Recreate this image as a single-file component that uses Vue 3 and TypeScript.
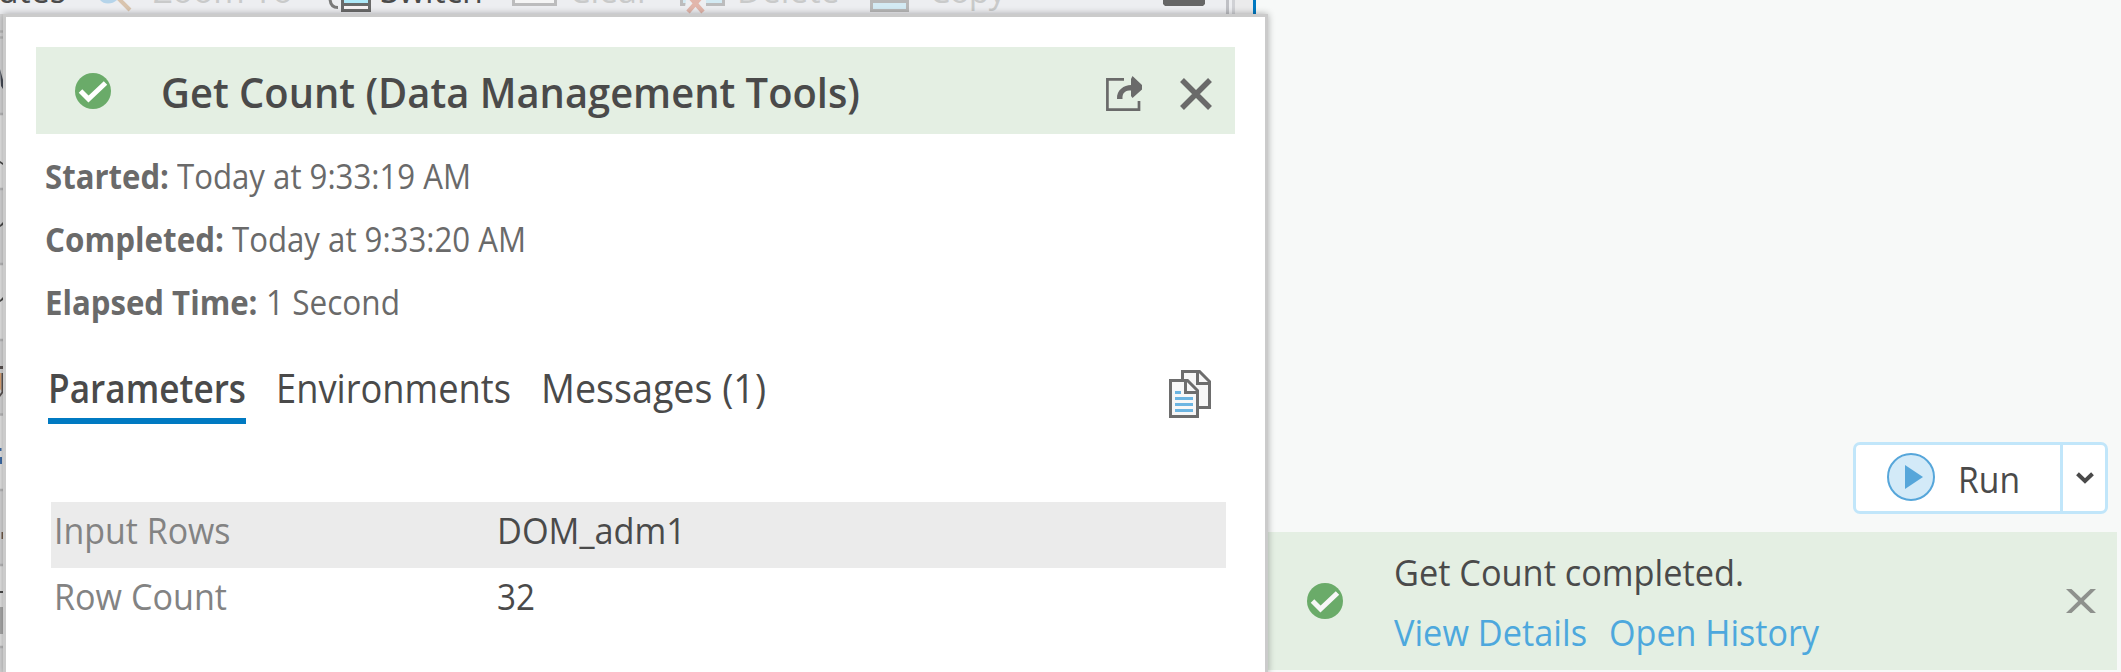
<script setup lang="ts">
import type { Directive } from 'vue'

interface Line { label: string; labelWidth: number; value: string; valueWidth: number }
interface Tab { name: string; width: number; active?: boolean }
interface Row { name: string; nameWidth: number; value: string; valueWidth: number }

// Condenses a single line of text horizontally so that it advances by the given width.
const vFit: Directive<HTMLElement, number> = {
  mounted(el, { value }) {
    const natural = el.getBoundingClientRect().width
    el.style.transform = `scaleX(${value / natural})`
    el.style.marginRight = `${value - natural}px`
  },
}

const lines: Line[] = [
  { label: 'Started:', labelWidth: 124, value: 'Today at 9:33:19 AM', valueWidth: 294 },
  { label: 'Completed:', labelWidth: 179, value: 'Today at 9:33:20 AM', valueWidth: 294 },
  { label: 'Elapsed Time:', labelWidth: 212.5, value: '1 Second', valueWidth: 134 },
]
const tabs: Tab[] = [
  { name: 'Parameters', width: 198, active: true },
  { name: 'Environments', width: 235 },
  { name: 'Messages (1)', width: 225 },
]
const rows: Row[] = [
  { name: 'Input Rows', nameWidth: 176.5, value: 'DOM_adm1', valueWidth: 189 },
  { name: 'Row Count', nameWidth: 173, value: '32', valueWidth: 38 },
]
</script>

<template>
  <div class="screen">
    <div class="toolbar">
      <svg class="toolbar-icons" width="1265" height="14" viewBox="0 0 1265 14">
        <path d="M100 0H117Q113 3.5 108 3.5Q103 3.5 100 0Z" fill="#b5d4ea" />
        <path d="M118 -2L130 10" stroke="#d9c4ae" stroke-width="4" />
        <path d="M330 -2Q330 7.5 338 7.5" fill="none" stroke="#7a7a7a" stroke-width="3" />
        <path d="M341 0H371V12H341Z" fill="#6a6a6a" />
        <path d="M344 0H368V3H344Z" fill="#aee8f7" />
        <path d="M344 6H368V9H344Z" fill="#f8f2f3" />
        <path d="M512 0H557V6H512Z" fill="#bcbcbd" />
        <path d="M515 0H554V3H515Z" fill="#f5f5f5" />
        <path d="M680 0H725V6H680Z" fill="#bcbcbd" />
        <path d="M683 0H722V3H683Z" fill="#d3eaf3" />
        <path d="M686 0H706V6L708 14H684Z" fill="#edeef1" />
        <path d="M688 12L702 -4M703 12L689 -4" stroke="#e2b6ab" stroke-width="4.5" />
        <path d="M870 0H909V12H870Z" fill="#b8b8b8" />
        <path d="M873 3H906V9H873Z" fill="#d3eaf3" />
        <path d="M1163 0H1205V4L1203 6H1165L1163 4Z" fill="#666" />
        <path d="M1227.5 0V14" stroke="#bfc0c5" stroke-width="3" />
        <path d="M1233.5 0V14" stroke="#d0d1d5" stroke-width="3" />
        <path d="M1235 0H1253V14H1235Z" fill="#ebebec" />
        <path d="M1253 0H1256V14H1253Z" fill="#0079c1" />
        <path d="M1256 0H1265V14H1256Z" fill="#f7f9f8" />
      </svg>
      <span class="command attributes">Attributes</span>
      <span class="command zoom off">Zoom To</span>
      <span class="command switch">Switch</span>
      <span class="command clear off">Clear</span>
      <span class="command delete off">Delete</span>
      <span class="command copy off">Copy</span>
    </div>

    <svg class="grid-edge" width="3" height="658" viewBox="0 14 3 658">
      <path d="M0 14H3V672H0Z" fill="#d5d5d6" />
      <path d="M0 115H3V188H0ZM0 265H3V339H0ZM0 415H3V489H0ZM0 566H3V646H0Z" fill="#e5e5e5" />
      <path d="M0 31.5H3M0 37.5H3M0 114H3M0 189H3M0 264H3M0 340H3M0 414.500H3M0 490H3M0 565H3M0 647H3" stroke="#b9b9ba" stroke-width="2.500" />
      <path d="M0 69L3 80V89L1 86Z" fill="#454a55" />
      <path d="M0 161L3 163V165L0 163ZM0 225L3 222V225L0 227ZM0 300L3 297V300L0 302Z" fill="#4a4a4a" />
      <path d="M0 373H1.500V391L0 389Z" fill="#dda373" />
      <path d="M0 366H3V369H0ZM1.500 373H3V393L0 397V394L1.500 392Z" fill="#5a5352" />
      <path d="M0 448H1.500V451H0ZM0 457H2V464H0Z" fill="#3d6ca8" />
      <path d="M1.500 532H3V539H1.500Z" fill="#735b49" />
      <path d="M0 591H3V593H0Z" fill="#4a4a4a" />
      <path d="M0 607H3V634H0Z" fill="#a9a9a9" />
    </svg>

    <section class="details">
      <header class="title-bar">
        <svg class="title-check" width="36" height="36" viewBox="0 0 36 36">
          <circle cx="18" cy="18" r="18" fill="#6aab69" />
          <path d="M5.500 18L13.500 26L30.500 10" fill="none" stroke="#fff" stroke-width="5" />
        </svg>
        <h1><span v-fit="699" class="fit">Get Count (Data Management Tools)</span></h1>
        <svg class="share" width="37" height="37" viewBox="0 0 37 37">
          <path d="M18 3.300H1.400V33.700H33V25" fill="none" stroke="#6a6a6a" stroke-width="2.700" />
          <path d="M11 23C10.500 14 18 9 25 9V3L26.500 0L36 9V13.500L26.500 22L25 20V14.500C20 14.500 16 16 16.500 23Z" fill="#6a6a6a" />
        </svg>
        <svg class="dismiss" width="32" height="32" viewBox="0 0 32 32">
          <path d="M2 2L30 30M30 2L2 30" stroke="#6a6a6a" stroke-width="5.500" />
        </svg>
      </header>

      <div class="times">
        <p v-for="line in lines" :key="line.label">
          <b v-fit="line.labelWidth" class="fit">{{ line.label }}</b>
          <span v-fit="line.valueWidth" class="fit">{{ line.value }}</span>
        </p>
      </div>

      <nav class="tabs">
        <a v-for="tab in tabs" :key="tab.name" :class="{ active: tab.active }">
          <span v-fit="tab.width" class="fit">{{ tab.name }}</span>
        </a>
        <svg class="copy-pages" width="42" height="48" viewBox="0 0 42 48">
          <path d="M13.500 1.500H30.500L40.500 11.500V37.500H13.500Z" fill="#f7f7f7" stroke="#6d6d6d" stroke-width="3" />
          <path d="M28.500 2V13.500H40" fill="none" stroke="#6d6d6d" stroke-width="3" />
          <path d="M1.500 10.500H18.500L28.500 20.500V46.500H1.500Z" fill="#f7f7f7" stroke="#6d6d6d" stroke-width="3" />
          <path d="M16.500 11V22.500H28" fill="none" stroke="#6d6d6d" stroke-width="3" />
          <path d="M6 22.500H12M6 28.500H24M6 34.500H24M6 40.500H24" stroke="#6cb5e2" stroke-width="3" />
        </svg>
      </nav>

      <div class="parameters">
        <div v-for="row in rows" :key="row.name" class="row">
          <div class="name"><span v-fit="row.nameWidth" class="fit">{{ row.name }}</span></div>
          <div class="value"><span v-fit="row.valueWidth" class="fit">{{ row.value }}</span></div>
        </div>
      </div>
    </section>

    <aside class="pane">
      <div class="run-button">
        <button class="run">
          <svg width="48" height="48" viewBox="0 0 48 48">
            <circle cx="24" cy="24" r="23" fill="#d3eaf8" stroke="#56a6da" stroke-width="2" />
            <path d="M18 12L36 24L18 36Z" fill="#56a6da" />
          </svg>
          <span v-fit="62" class="fit run-label">Run</span>
        </button>
        <button class="more">
          <svg width="18" height="12" viewBox="0 0 18 12">
            <path d="M1.500 1.800L9 9L16.500 1.800" fill="none" stroke="#4a4a4a" stroke-width="4" />
          </svg>
        </button>
      </div>
      <div class="notice">
        <svg class="notice-check" width="36" height="36" viewBox="0 0 36 36">
          <circle cx="18" cy="18" r="18" fill="#6aab69" />
          <path d="M5.500 18L13.500 26L30.500 10" fill="none" stroke="#f7f7f7" stroke-width="5" />
        </svg>
        <div class="message">
          <p><span v-fit="350" class="fit">Get Count completed.</span></p>
          <p class="links">
            <a><span v-fit="193" class="fit">View Details</span></a>
            <a><span v-fit="210" class="fit">Open History</span></a>
          </p>
        </div>
        <svg class="notice-close" width="30" height="24" viewBox="0 0 30 24">
          <path d="M0 0H5.500L15 9L24.500 0H30L17.800 12L30 24H24.500L15 15L5.500 24H0L12.200 12Z" fill="#8e918d" />
        </svg>
      </div>
    </aside>
  </div>
</template>

<style>
body { margin: 0; overflow: hidden; }
</style>

<style scoped>
.screen {
  position: relative;
  display: grid;
  grid-template-columns: 1268px 1fr;
  width: 2121px;
  height: 672px;
  overflow: hidden;
  background: #f7f9f8;
  color: #4a4a4a;
  font-family: "Open Sans", "Noto Sans", sans-serif;
}
h1, p { margin: 0; font-weight: inherit; }
.fit { display: inline-block; white-space: nowrap; transform-origin: 0 50%; }
svg { display: block; flex: none; }

.toolbar {
  position: absolute;
  top: 0;
  left: 0;
  width: 1265px;
  height: 17px;
  background: #edeef1;
  overflow: hidden;
}
.toolbar-icons { position: absolute; top: 0; left: 0; }
.command {
  position: absolute;
  top: -34px;
  font-size: 34px;
  line-height: 48px;
  white-space: nowrap;
  color: #4a4a4a;
}
.attributes { right: 1199px; }
.zoom { left: 153px; }
.switch { left: 380px; }
.clear { left: 569px; }
.delete { left: 737px; }
.copy { left: 929px; letter-spacing: -1px; }
.off { color: #c9caca; }
.grid-edge { position: absolute; top: 14px; left: 0; }

.details {
  position: relative;
  box-sizing: border-box;
  width: 1265px;
  height: 660px;
  margin: 14px 0 0 3px;
  padding: 30px 30px 0;
  border: 3px solid #cbcbcb;
  border-bottom: 0;
  background: #fff;
  box-shadow: 0 0 7px rgba(0, 0, 0, 0.32);
}
.title-bar {
  display: flex;
  align-items: center;
  height: 87px;
  padding-right: 23px;
  background: #e4efe3;
}
.title-check { margin: 1px 0 0 39px; }
.title-bar h1 {
  flex: 1;
  margin-left: 50px;
  padding-top: 3px;
  font-size: 42px;
  line-height: 60px;
  font-weight: 600;
}
.share { margin: 7px 37px 0 0; }
.dismiss { margin-top: 7px; }

.times {
  margin-top: 11px;
  padding-left: 9px;
  font-size: 34px;
  line-height: 63px;
  color: #6a6a6a;
}
.times p { display: flex; height: 63px; gap: 8px; }
.times b { font-weight: 700; }

.tabs {
  display: flex;
  gap: 30px;
  margin-top: 24px;
  padding: 0 24px 0 12px;
  height: 66px;
  font-size: 39.500px;
  line-height: 60px;
}
.tabs a { height: 60px; }
.tabs .active { border-bottom: 6px solid #007ac2; font-weight: 600; }
.copy-pages { margin: 12px 0 0 auto; }

.parameters { width: 1175px; margin: 78px 0 0 15px; font-size: 36px; line-height: 58px; }
.row { display: grid; grid-template-columns: 446px 1fr; height: 66px; }
.row:first-child { background: #ebebeb; }
.name { padding-left: 3px; color: #838383; }

.pane { display: flex; flex-direction: column; font-size: 36px; }
.run-button {
  display: flex;
  box-sizing: border-box;
  width: 255px;
  height: 72px;
  margin: 442px 0 0 585px;
  border: 3px solid #c1e6fa;
  border-radius: 7px;
  background: #fff;
}
button {
  display: flex;
  align-items: center;
  margin: 0;
  padding: 0;
  border: 0;
  background: none;
  font: inherit;
  color: inherit;
}
.run { width: 204px; padding-left: 31px; gap: 23px; }
.run svg { margin-bottom: 2px; }
.run-label { padding-top: 3px; }
.more { flex: 1; justify-content: center; border-left: 3px solid #c1e6fa; padding-left: 2px; }
.notice {
  display: flex;
  align-items: center;
  width: 849px;
  height: 138px;
  margin-top: 18px;
  background: #e4efe3;
}
.notice-check { margin-left: 39px; }
.message { flex: 1; margin: 4px 0 0 51px; line-height: 60px; }
.message p { height: 60px; }
.links { display: flex; gap: 22px; color: #4da8dd; }
.notice-close { margin-right: 21px; }
</style>
